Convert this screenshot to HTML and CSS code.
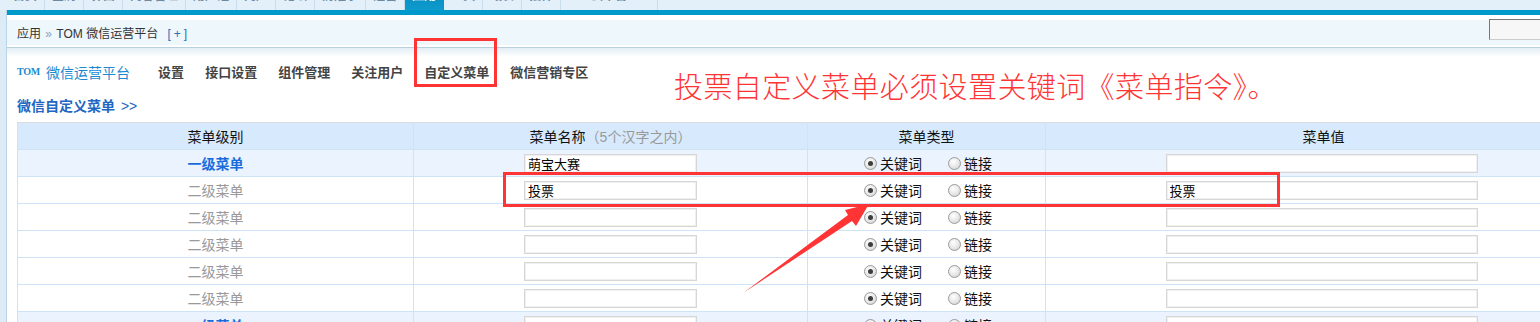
FILE: index.html
```html
<!DOCTYPE html>
<html lang="zh-CN">
<head>
<meta charset="utf-8">
<title>TOM 微信运营平台 - 自定义菜单</title>
<link rel="stylesheet" href="styles.css">
</head>
<body>
<div class="page">
  <div class="topnav">
    <span class="tab"><span class="tl">首页</span></span>
    <span class="tab"><span class="tl">全局</span></span>
    <span class="tab"><span class="tl">界面</span></span>
    <span class="tab"><span class="tl">内容管理</span></span>
    <span class="tab"><span class="tl">用户组</span></span>
    <span class="tab"><span class="tl">门户</span></span>
    <span class="tab"><span class="tl">论坛</span></span>
    <span class="tab"><span class="tl">防灌水</span></span>
    <span class="tab"><span class="tl">运营</span></span>
    <span class="tab active"><span class="tl">应用</span></span>
    <span class="tab"><span class="tl">工具</span></span>
    <span class="tab"><span class="tl">站长</span></span>
    <span class="tab"><span class="tl">插件</span></span>
    <span class="tab wide"><span class="tl">云平台</span></span>
  </div>
  <div class="frame">
    <div class="side"></div>
    <div class="main">
      <div class="bluebar"></div>
      <div class="crumb">
        <div class="crumb-text">应用 <span class="raquo">»</span> TOM 微信运营平台 <span class="plus">[+]</span></div>
        <div class="search"></div>
      </div>
      <div class="divider"></div>
      <div class="content">
        <div class="nav">
          <span class="brand"><span class="logo">TOM</span>微信运营平台</span>
          <span class="nav-item">设置</span>
          <span class="nav-item">接口设置</span>
          <span class="nav-item">组件管理</span>
          <span class="nav-item">关注用户</span>
          <span class="nav-item">自定义菜单</span>
          <span class="nav-item">微信营销专区</span>
        </div>
        <div class="subtitle">微信自定义菜单 <span class="chev">&gt;&gt;</span></div>
        <table class="menu-table">
          <colgroup>
            <col class="c1"><col class="c2"><col class="c3"><col class="c4">
          </colgroup>
          <thead>
            <tr>
              <th>菜单级别</th>
              <th>菜单名称<span class="hint">（5个汉字之内）</span></th>
              <th>菜单类型</th>
              <th>菜单值</th>
            </tr>
          </thead>
          <tbody>
            <tr class="lv1">
              <td class="level">一级菜单</td>
              <td><input class="txt name" value="萌宝大赛"></td>
              <td><span class="radios"><span class="opt"><span class="radio on"></span>关键词</span><span class="opt"><span class="radio"></span>链接</span></span></td>
              <td><input class="txt val" value=""></td>
            </tr>
            <tr class="lv2">
              <td class="level">二级菜单</td>
              <td><input class="txt name" value="投票"></td>
              <td><span class="radios"><span class="opt"><span class="radio on"></span>关键词</span><span class="opt"><span class="radio"></span>链接</span></span></td>
              <td><input class="txt val" value="投票"></td>
            </tr>
            <tr class="lv2">
              <td class="level">二级菜单</td>
              <td><input class="txt name" value=""></td>
              <td><span class="radios"><span class="opt"><span class="radio on"></span>关键词</span><span class="opt"><span class="radio"></span>链接</span></span></td>
              <td><input class="txt val" value=""></td>
            </tr>
            <tr class="lv2">
              <td class="level">二级菜单</td>
              <td><input class="txt name" value=""></td>
              <td><span class="radios"><span class="opt"><span class="radio on"></span>关键词</span><span class="opt"><span class="radio"></span>链接</span></span></td>
              <td><input class="txt val" value=""></td>
            </tr>
            <tr class="lv2">
              <td class="level">二级菜单</td>
              <td><input class="txt name" value=""></td>
              <td><span class="radios"><span class="opt"><span class="radio on"></span>关键词</span><span class="opt"><span class="radio"></span>链接</span></span></td>
              <td><input class="txt val" value=""></td>
            </tr>
            <tr class="lv2">
              <td class="level">二级菜单</td>
              <td><input class="txt name" value=""></td>
              <td><span class="radios"><span class="opt"><span class="radio on"></span>关键词</span><span class="opt"><span class="radio"></span>链接</span></span></td>
              <td><input class="txt val" value=""></td>
            </tr>
            <tr class="lv1">
              <td class="level">一级菜单</td>
              <td><input class="txt name" value=""></td>
              <td><span class="radios"><span class="opt"><span class="radio on"></span>关键词</span><span class="opt"><span class="radio"></span>链接</span></span></td>
              <td><input class="txt val" value=""></td>
            </tr>
          </tbody>
        </table>
      </div>
    </div>
  </div>

  <div class="mark mark-nav"></div>
  <div class="mark mark-row"></div>
  <div class="notice">投票自定义菜单必须设置关键词《菜单指令》。</div>
  <svg class="arrow" width="1540" height="322" viewBox="0 0 1540 322">
    <polygon points="743,293 848,215 845,210 869,204 856,226 852,221" fill="#ff3535"/>
  </svg>
</div>
</body>
</html>
```

FILE: styles.css
```css
html, body {
  margin: 0;
  padding: 0;
  overflow: hidden;
  background: #fff;
}

body {
  font-family: "Liberation Sans", "Noto Sans CJK SC", sans-serif;
  font-size: 12px;
  color: #333;
}

.page {
  position: relative;
  width: 1611px;
}

/* top nav (mostly scrolled off) */
.topnav {
  height: 10px;
  background: #e3f0fa;
  display: flex;
  padding-left: 6px;
  overflow: hidden;
}

.tab {
  height: 10px;
  padding: 0 7px;
  border-right: 1px solid #c9dcea;
  overflow: hidden;
  color: #6d8aa0;
  font-size: 12px;
  white-space: nowrap;
}

.tab .tl {
  display: block;
  line-height: 12px;
  margin-top: -10px;
  font-weight: bold;
}

.tab.active {
  background: linear-gradient(#0b93c6, #0e9bcd);
  color: #fff;
  border-right-color: #0b93c6;
}

.tab.wide {
  padding: 0 30px;
}

.frame {
  display: flex;
}

.side {
  width: 6px;
  background: #dcebf6;
  border-right: 1px solid #bad4e6;
  flex: none;
}

.main {
  flex: 1;
  min-width: 0;
}

.bluebar {
  height: 5px;
  background: #0099cc;
}

.crumb {
  margin-top: 5px;
  height: 25px;
  background: #eef7fb;
  display: flex;
  align-items: center;
  padding-left: 10px;
}

.crumb-text {
  color: #333;
  font-size: 12px;
  white-space: nowrap;
}

.raquo {
  color: #8aa4b8;
  margin: 0 1px;
}

.plus {
  color: #2b6cb8;
  margin-left: 6px;
  letter-spacing: 3px;
}

.search {
  margin-left: auto;
  align-self: flex-start;
  margin-top: -1px;
  width: 120px;
  height: 19px;
  border: 1px solid;
  border-color: #777 #ccc #ccc #777;
  background: #f7f7f7;
}

.divider {
  margin-top: 2px;
  border-top: 1px solid #b8cfdc;
  height: 9px;
  background: linear-gradient(#e3eef5, #fff);
}

.content {
  padding: 0 10px;
}

.nav {
  height: 29px;
  display: flex;
  align-items: center;
  gap: 21px;
  white-space: nowrap;
}

.brand {
  color: #1d8ad0;
  font-size: 14px;
  margin-right: 7px;
  display: flex;
  align-items: center;
}

.logo {
  font-family: "Liberation Serif", serif;
  font-weight: bold;
  font-size: 10px;
  color: #1d8ad0;
  margin-right: 6px;
  letter-spacing: -0.2px;
}

.nav-item {
  font-size: 13px;
  font-weight: bold;
  color: #444;
}

.subtitle {
  margin-top: 10px;
  height: 20px;
  line-height: 20px;
  font-size: 14px;
  font-weight: bold;
  color: #2266c4;
}

.chev {
  font-weight: normal;
  margin-left: 2px;
}

.menu-table {
  margin-top: 6px;
  width: 1584px;
  border-collapse: collapse;
  table-layout: fixed;
  font-size: 14px;
}

.c1 { width: 396px; }
.c2 { width: 394px; }
.c3 { width: 238px; }
.c4 { width: 556px; }

.menu-table thead tr {
  border-top: 1px solid #dcdcdc;
}

.menu-table th,
.menu-table td {
  height: 26px;
  padding: 0;
  text-align: center;
  vertical-align: middle;
  border-bottom: 1px solid #cfe3f6;
  border-left: 1px solid #cfe3f6;
  border-right: 1px solid #cfe3f6;
}

.menu-table th {
  background: #d7e9fc;
  font-weight: normal;
  color: #111;
}

.hint {
  color: #999;
}

.lv1 td {
  background: #ebf3fe;
}

.lv1 .level {
  color: #1a6cdc;
  font-weight: bold;
}

.lv2 .level {
  color: #999;
}

.txt {
  box-sizing: border-box;
  height: 19px;
  border: 1px solid #d6d6d6;
  box-shadow: inset 0 0 0 1px #f0f0f0;
  padding: 0 3px;
  font-family: "Liberation Sans", "Noto Sans CJK SC", sans-serif;
  font-size: 13px;
  color: #000;
  background: #fff;
  vertical-align: middle;
  outline: none;
}

.txt.name { width: 173px; }
.txt.val { width: 312px; margin-right: 4px; }

.radios {
  display: inline-flex;
  align-items: center;
  gap: 26px;
  color: #111;
  margin-left: 3px;
}

.opt {
  display: inline-flex;
  align-items: center;
}

.radio {
  position: relative;
  width: 11px;
  height: 11px;
  border-radius: 50%;
  border: 1px solid #9c9c9c;
  background: radial-gradient(circle at 40% 35%, #ffffff 0%, #e6e6e6 55%, #c8c8c8 100%);
  margin-right: 3px;
}

.radio.on::after {
  content: "";
  position: absolute;
  left: 3px;
  top: 3px;
  width: 5px;
  height: 5px;
  border-radius: 50%;
  background: #3d3d3d;
}

/* annotations drawn over the screenshot */
.mark {
  position: absolute;
  border: 3px solid #ff3535;
  box-sizing: border-box;
}

.mark-nav {
  left: 414px;
  top: 38px;
  width: 83px;
  height: 49px;
}

.mark-row {
  left: 503px;
  top: 172px;
  width: 777px;
  height: 35px;
}

.notice {
  position: absolute;
  left: 674px;
  top: 70px;
  font-family: "Noto Sans CJK SC", sans-serif;
  font-weight: 300;
  font-size: 29px;
  letter-spacing: 0.4px;
  line-height: 30px;
  color: #ff3535;
  white-space: nowrap;
}

.arrow {
  position: absolute;
  left: 0;
  top: 0;
  pointer-events: none;
}
```
